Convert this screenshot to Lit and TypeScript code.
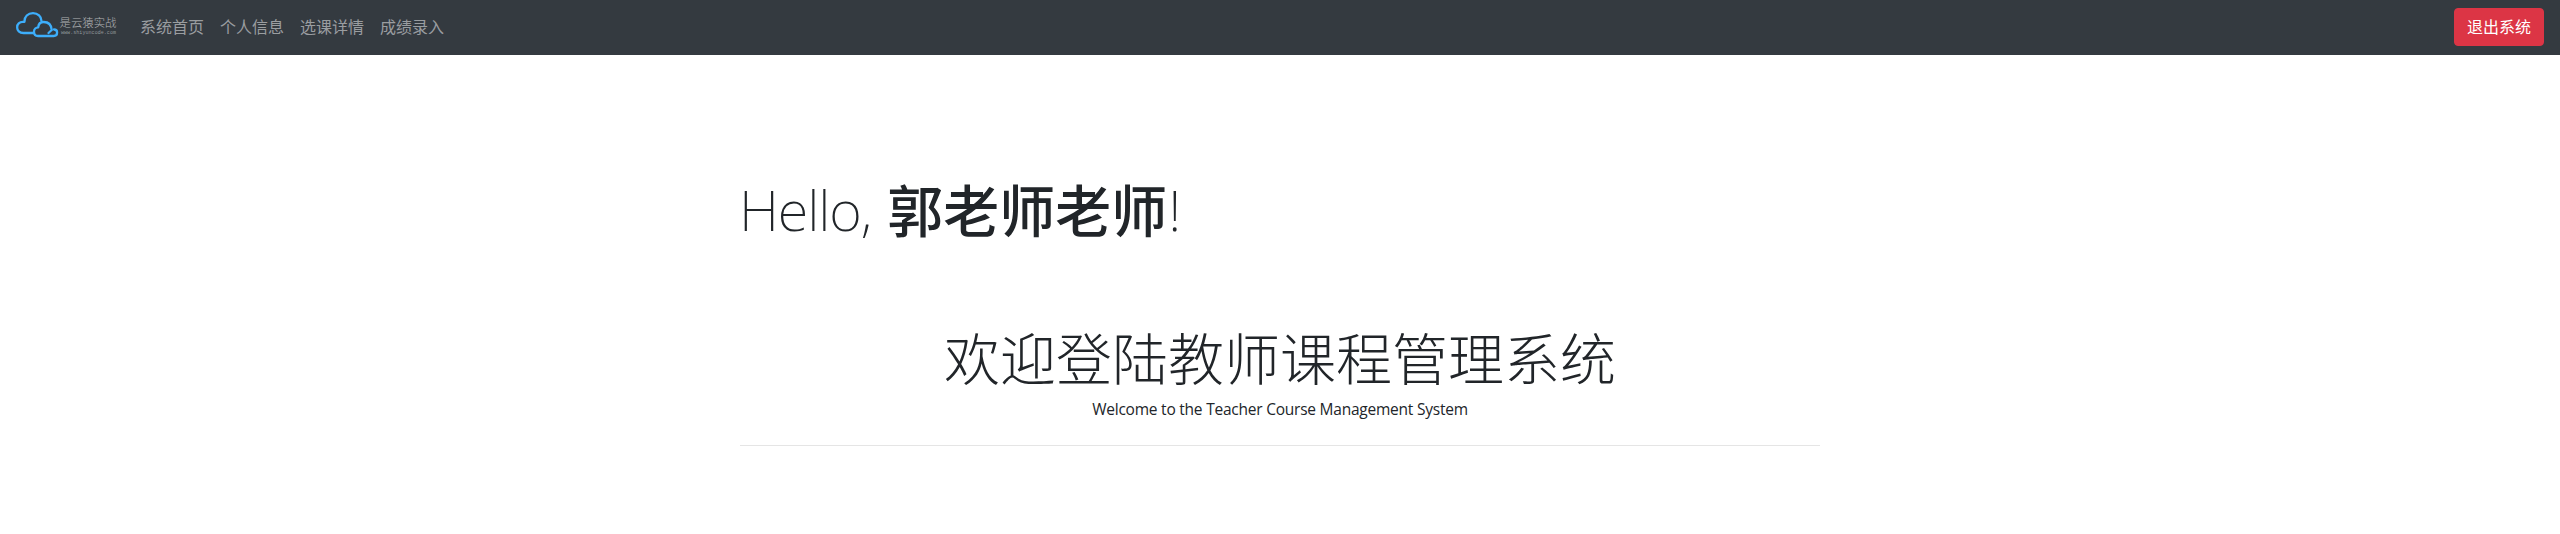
import { LitElement, html, css } from 'lit';
import { customElement } from 'lit/decorators.js';

@customElement('app-root')
export class AppRoot extends LitElement {
  static styles = css`
    :host { display: block; min-height: 534px; background: #fff; color: #212529; font: 16px/24px "Noto Sans", "Noto Sans CJK SC", sans-serif; }
    * { box-sizing: border-box; }
    nav { display: flex; align-items: center; height: 55px; padding: 0 16px 1px; background: #343a40; }
    .logo { display: block; width: 102px; height: 30px; margin-right: 14px; }
    .name { font: 300 11.4px "Noto Sans CJK SC", sans-serif; fill: #b0b2b4; }
    .site { font: 5px "Liberation Mono", monospace; fill: #92979b; }
    a { padding: 8px; color: #9a9da0; white-space: nowrap; }
    button { margin-left: auto; height: 38px; width: 90px; padding: 0; border: 1px solid #dc3545; border-radius: 4px; background: #dc3545; color: #fff; font: inherit; }
    main { width: 1080px; margin: 0 auto; padding-top: 121px; }
    h1, h2 { height: 67px; margin: 0; font-size: 56px; line-height: 67px; font-weight: 300; }
    h1 .greet { margin-left: -1px; font-weight: 200; font-family: "Noto Sans", sans-serif; letter-spacing: -1.1px; }
    h1 .mark { margin-left: 1px; font-weight: 200; font-family: "Noto Sans", sans-serif; }
    b { margin-left: 3px; font-weight: 500; vertical-align: -1px; }
    section { margin-top: 82px; text-align: center; }
    p { margin: 5px 0 0; font-family: "Open Sans", sans-serif; font-size: 15.5px; letter-spacing: -0.23px; }
    hr { margin: 24px 0 0; border: 0; border-top: 1px solid #e5e5e5; }
  `;
  render() {
    return html`<nav>
        <svg class="logo" viewBox="16 12 102 30">
          <g fill="none" stroke="#3daefb" stroke-width="2.3" stroke-linecap="round" stroke-linejoin="round">
            <path d="M34 33H23.500C19.500 33 17 30.500 17.200 27.300C17 24 19.700 21.800 22.700 21.800H24.500C24.200 16.500 28 13.200 33 13.200C37.800 13.200 41.500 16.500 41.500 21"/>
            <path d="M48.500 33L51.700 30M54 29.500C56.200 29.500 57.100 31 57.100 32.500C57.100 34.500 56 36 53.700 36H38C35.300 36 34 34 34 31.700C34 29 36 27.300 38.200 27.300C38.500 24 40.500 22 43.700 22C48 22 51.300 24.500 51.700 30"/>
          </g>
          <text class="name" x="59.500" y="27">是云猿实战</text>
          <text class="site" x="61" y="34" textLength="55">www.shiyuncode.com</text>
        </svg>
        <a>系统首页</a><a>个人信息</a><a>选课详情</a><a>成绩录入</a>
        <button>退出系统</button>
      </nav>
      <main>
        <h1><span class="greet">Hello, </span><b>郭老师老师</b><span class="mark">!</span></h1>
        <section><h2>欢迎登陆教师课程管理系统</h2><p>Welcome to the Teacher Course Management System</p></section>
        <hr>
      </main>`;
  }
}
